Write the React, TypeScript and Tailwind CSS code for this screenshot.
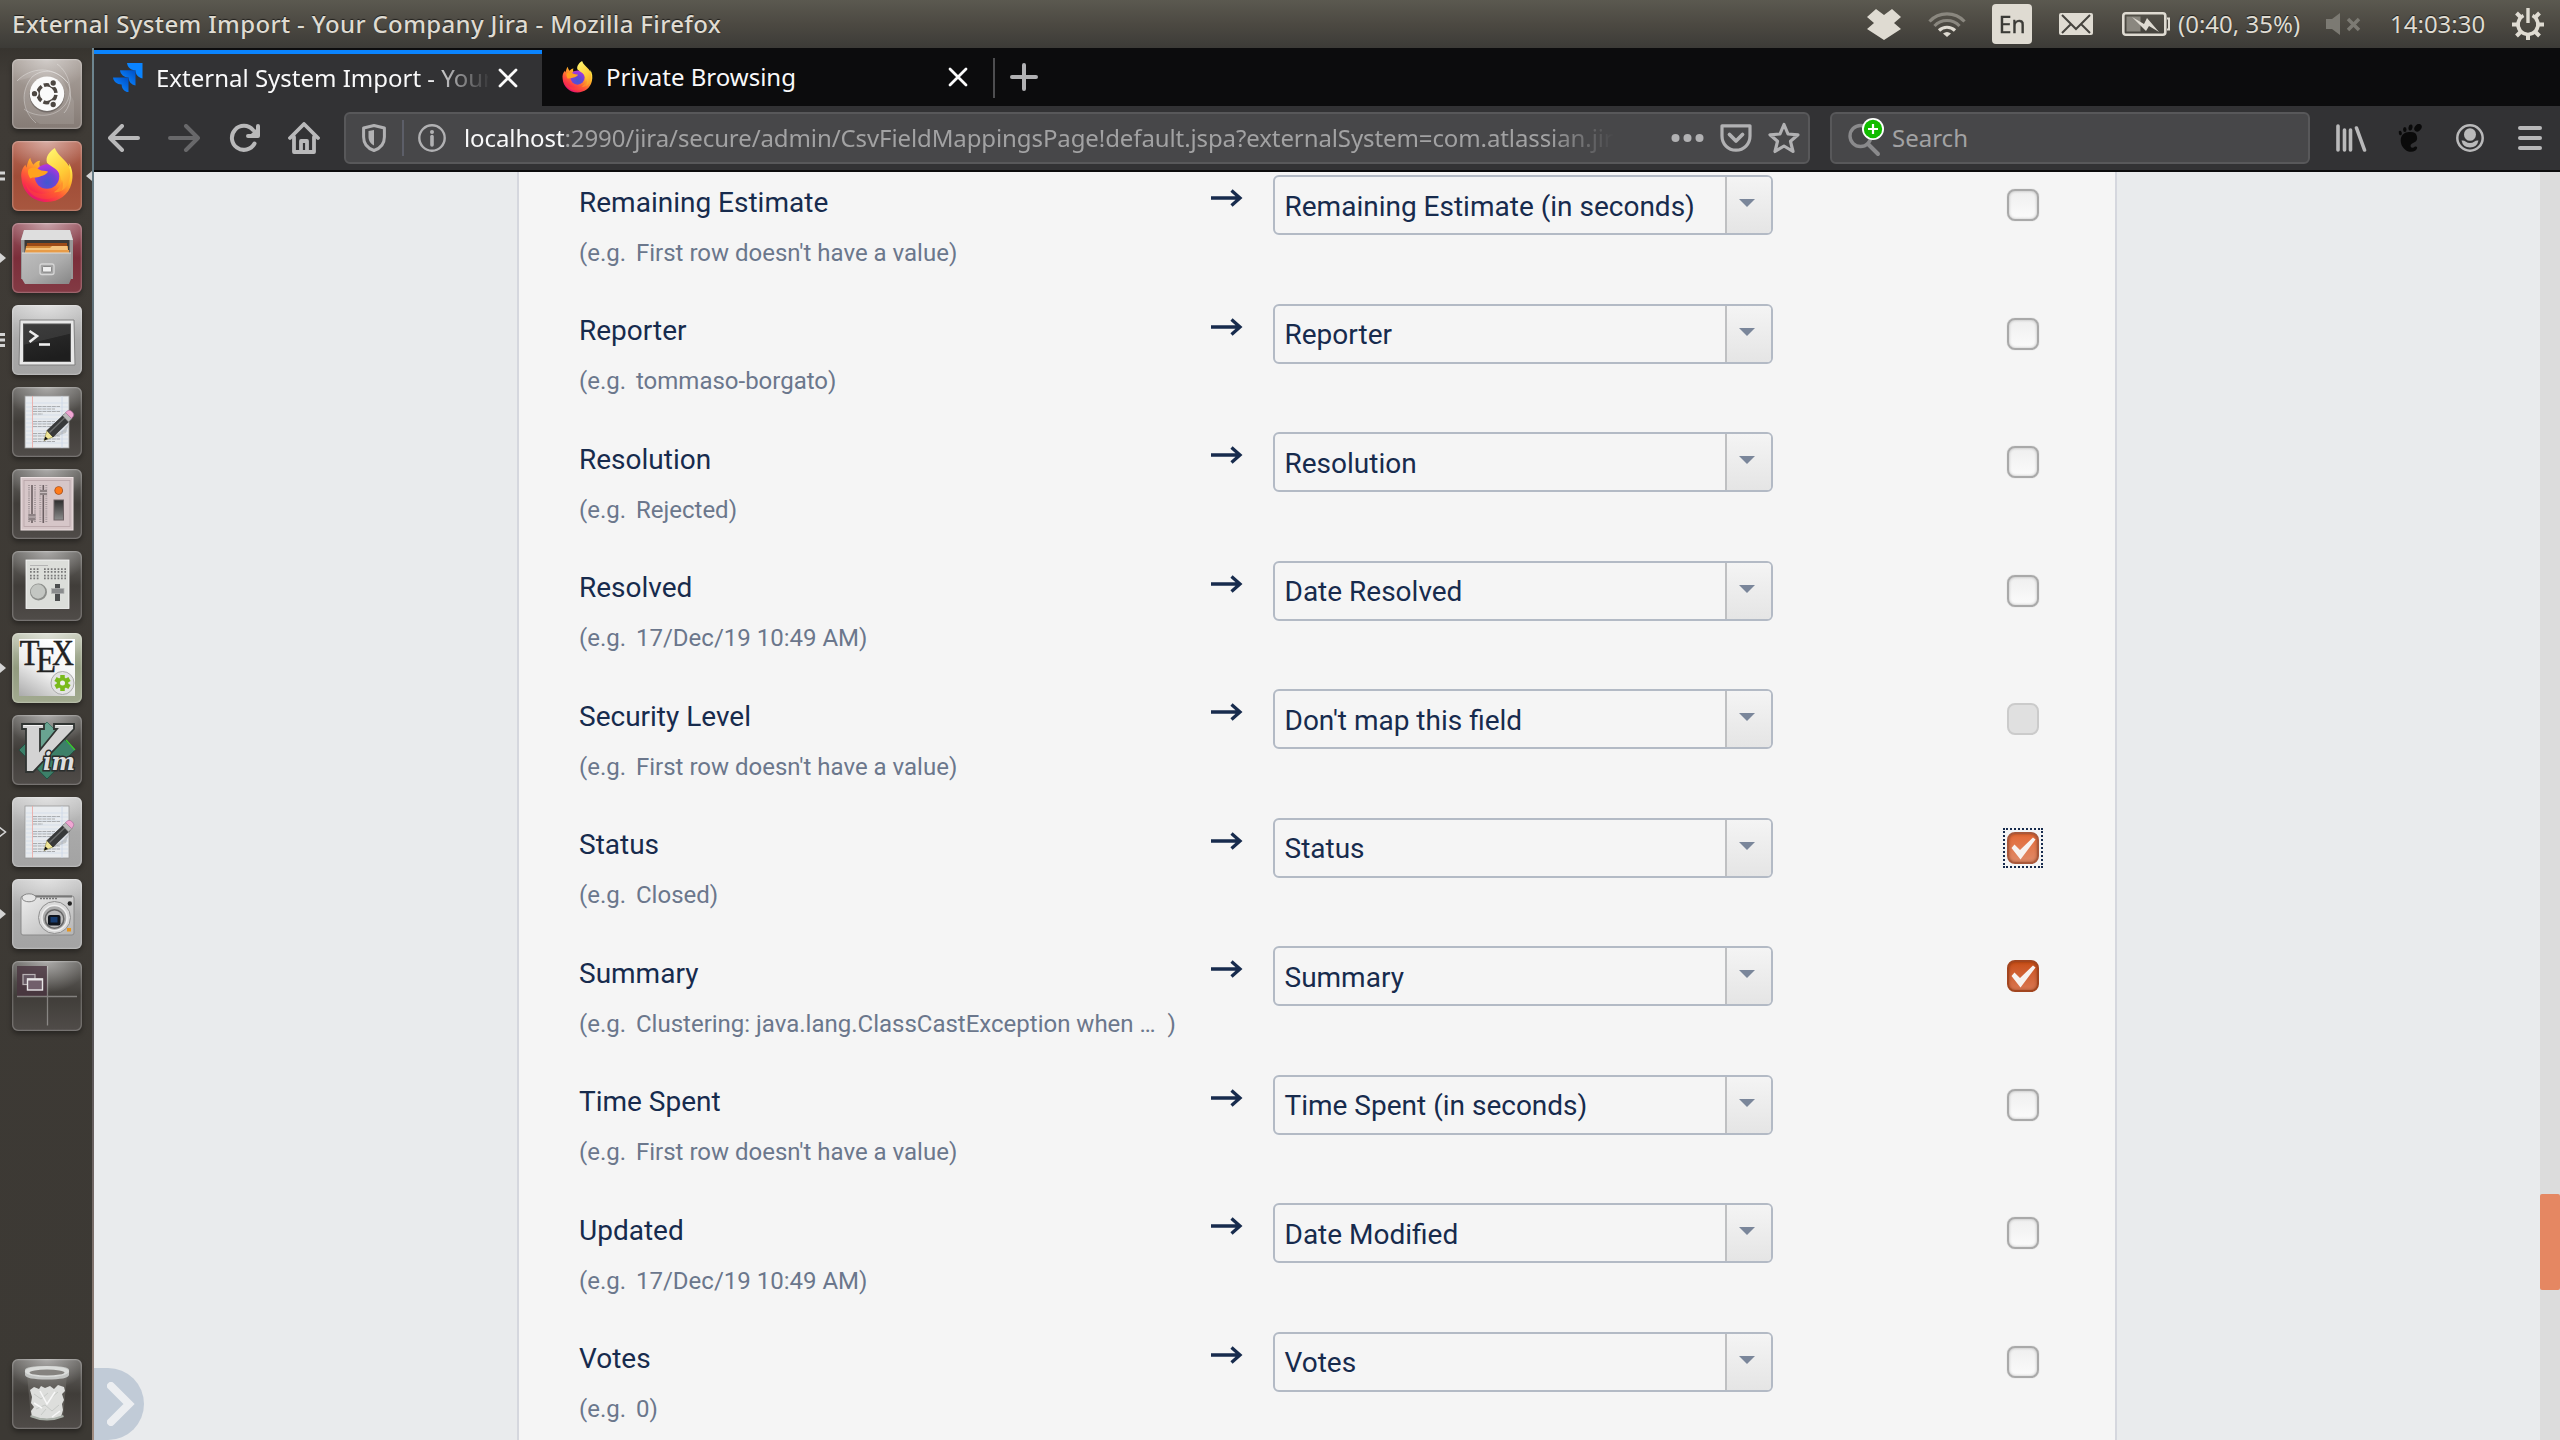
import React from "react";

const ROWS = [
  { name: "Remaining Estimate", eg: "First row doesn't have a value)", field: "Remaining Estimate (in seconds)", state: "off" },
  { name: "Reporter", eg: "tommaso-borgato)", field: "Reporter", state: "off" },
  { name: "Resolution", eg: "Rejected)", field: "Resolution", state: "off" },
  { name: "Resolved", eg: "17/Dec/19 10:49 AM)", field: "Date Resolved", state: "off" },
  { name: "Security Level", eg: "First row doesn't have a value)", field: "Don't map this field", state: "disabled" },
  { name: "Status", eg: "Closed)", field: "Status", state: "focus" },
  { name: "Summary", eg: "Clustering: java.lang.ClassCastException when …\u00a0 )", field: "Summary", state: "on" },
  { name: "Time Spent", eg: "First row doesn't have a value)", field: "Time Spent (in seconds)", state: "off" },
  { name: "Updated", eg: "17/Dec/19 10:49 AM)", field: "Date Modified", state: "off" },
  { name: "Votes", eg: "0)", field: "Votes", state: "off" },
];

function FirefoxLogo({ id, className }: { id: string; className?: string }) {
  return (
    <svg viewBox="0 0 54 56" className={className}>
      <defs>
        <linearGradient id={id + "a"} x1="0.85" y1="0.1" x2="0.2" y2="1">
          <stop offset="0" stopColor="#fff44f" />
          <stop offset="0.3" stopColor="#ffb329" />
          <stop offset="0.58" stopColor="#ff5f36" />
          <stop offset="0.8" stopColor="#f82a4e" />
          <stop offset="1" stopColor="#d8098a" />
        </linearGradient>
        <radialGradient id={id + "b"} cx="0.5" cy="0.75" r="0.75">
          <stop offset="0" stopColor="#4158d0" />
          <stop offset="0.5" stopColor="#6e44d6" />
          <stop offset="1" stopColor="#b833e1" />
        </radialGradient>
        <linearGradient id={id + "c"} x1="0.3" y1="0" x2="0.7" y2="1">
          <stop offset="0" stopColor="#fff36b" />
          <stop offset="0.6" stopColor="#ffcb36" />
          <stop offset="1" stopColor="#ff9a2b" />
        </linearGradient>
      </defs>
      <path d="M10 10C10 13 12 15 13 17C15 15 17 13 20 13C19 15 19 17 20 19L40 16C45 14 48 17 50 19L49 15C53 21 54 28 52 36C49 48 39 55 27 55C13 55 2 45 1 31C0 25 2 20 5 17L6 20C7 16 8 12 10 10Z" fill={`url(#${id}a)`} />
      <circle cx="27" cy="29" r="12.5" fill={`url(#${id}b)`} />
      <path d="M35 0C37 6 43 10 47 15C51 20 52 27 49 35C46 43 39 46 34 45C41 41 43 34 40 27C38 21 31 19 27 15C25 9 30 3 35 0Z" fill={`url(#${id}c)`} />
      <path d="M8 22C11 19 16 19 19 22C22 24 25 23 28 24C27 27 23 28 20 29C16 31 13 29 10 31C8 28 7 25 8 22Z" fill="#ffa21f" />
      <path d="M5 34C8 45 20 49 31 45C38 43 42 37 42 32C47 44 36 52 26 52C14 52 6 44 5 34Z" fill="#ff5a2c" opacity="0.35" />
    </svg>
  );
}

function JiraLogo() {
  return (
    <svg viewBox="0 0 30 29" className="h-[29px] w-[30px]">
      <defs>
        <linearGradient id="jg" x1="1" y1="0" x2="0.3" y2="0.8">
          <stop offset="0.1" stopColor="#0052c8" />
          <stop offset="1" stopColor="#0a84ff" />
        </linearGradient>
      </defs>
      <path d="M0 14.500H15.500V29.500C11 28.500 8.600 25.500 8.600 21.500C4 21.500 .5 18.500 0 14.500Z" fill="url(#jg)" />
      <path d="M7 7.300H22.500V22.500C18 21.500 15.600 18.500 15.600 14.500C11 14.400 7.500 11.500 7 7.300Z" fill="url(#jg)" />
      <path d="M14 0H29.500V15.500C25 14.500 22.500 11.500 22.500 7.300C18 7.300 14.500 4.500 14 0Z" fill="#0a84ff" />
    </svg>
  );
}

/* ---------- launcher icons, all on a 70 by 70 tile ---------- */

function UbuntuIcon() {
  return (
    <>
      <path d="M5 22C18 8 42 6 56 24C62 38 56 50 52 54" fill="none" stroke="#fff" strokeOpacity="0.35" strokeWidth="1" />
      <path d="M45 5C58 14 62 34 53 46C42 60 22 58 12 50" fill="none" stroke="#fff" strokeOpacity="0.3" strokeWidth="1" />
      <path d="M24 64C10 52 8 32 20 18C32 8 46 12 56 24" fill="none" stroke="#fff" strokeOpacity="0.35" strokeWidth="1" />
      <path d="M5 22C16 10 36 8 50 20L62 42V65H28C10 54 8 32 20 18Z" fill="#fff" opacity="0.1" />
      <circle cx="35" cy="36" r="17.500" fill="#000" opacity="0.25" />
      <circle cx="35" cy="34.700" r="17.200" fill="#fafafa" />
      <circle cx="35" cy="34.700" r="9" fill="none" stroke="#4d4742" strokeWidth="3.600" strokeDasharray="16.500 2.350" strokeDashoffset="-1.200" />
      <circle cx="22.500" cy="34.700" r="3.400" fill="#4d4742" stroke="#fafafa" strokeWidth="1.500" />
      <circle cx="41.200" cy="24" r="3.400" fill="#4d4742" stroke="#fafafa" strokeWidth="1.500" />
      <circle cx="41.200" cy="45.500" r="3.400" fill="#4d4742" stroke="#fafafa" strokeWidth="1.500" />
    </>
  );
}

function FilesIcon() {
  return (
    <>
      <defs>
        <linearGradient id="cab" x1="0" y1="0" x2="1" y2="1">
          <stop offset="0" stopColor="#bdbdbd" />
          <stop offset="0.5" stopColor="#adadad" />
          <stop offset="1" stopColor="#868686" />
        </linearGradient>
      </defs>
      <path d="M12 7H58L61 17V56H9V17Z" fill="#999" />
      <path d="M12 7H58L61 17H9Z" fill="#dedede" />
      <rect x="12.500" y="17" width="45" height="14" fill="#3a3836" />
      <path d="M15 20H55V31H14Z" fill="#9c4a17" />
      <path d="M14 23H56V31H13Z" fill="#d48736" />
      <path d="M14 25H38L40 23H55L57 31H13Z" fill="#f4c27c" />
      <path d="M14 27H57V31H13Z" fill="#e89c48" />
      <path d="M10 30H59V56L57 61H13L10 56Z" fill="url(#cab)" />
      <path d="M10 30H59" stroke="#ddd" />
      <rect x="28" y="41" width="14" height="10.500" rx="2" fill="#a5a5a5" stroke="#d6d6d6" strokeWidth="1.300" />
      <rect x="30.500" y="43.500" width="9" height="5.500" rx="1" fill="#eee" stroke="#777" strokeWidth=".8" />
    </>
  );
}

function TerminalIcon() {
  return (
    <>
      <defs>
        <linearGradient id="scr" x1="0" y1="0" x2="0.3" y2="1">
          <stop offset="0" stopColor="#3d3d3d" />
          <stop offset="0.5" stopColor="#373737" />
          <stop offset="0.52" stopColor="#262626" />
          <stop offset="1" stopColor="#1e1e1e" />
        </linearGradient>
      </defs>
      <path d="M8 15H62L63 60H7Z" fill="#e8e8e8" stroke="#808080" />
      <rect x="11.500" y="19" width="47" height="37.500" fill="url(#scr)" stroke="#555" />
      <path d="M17.500 26L25 31L17.500 37" fill="none" stroke="#eee" strokeWidth="2.600" />
      <path d="M27 39.500H38" stroke="#eee" strokeWidth="2.600" />
    </>
  );
}

function EditorIcon() {
  return (
    <>
      <rect x="13" y="9" width="44" height="52" fill="#e8ebee" stroke="#999" strokeWidth=".8" />
      {[16, 20, 24, 28, 32, 36, 40, 44, 48, 52, 56].map((y) => (
        <path key={y} d={`M14 ${y}H56`} stroke="#c9d6e8" strokeWidth=".6" />
      ))}
      <path d="M20.500 9V61" stroke="#eba6a0" strokeWidth=".8" />
      <path d="M50 9V61" stroke="#c9d6e8" strokeWidth=".8" />
      {[19.500, 22, 24.500, 27, 34.500, 37, 39.500, 46.500, 49, 52, 54.500].map((y, i) => (
        <path key={y} d={`M21 ${y}H${i === 3 ? 31 : i % 3 === 1 ? 43 : 48}`} stroke="#aaadb0" strokeWidth="1.200" strokeDasharray="4 .7" />
      ))}
      <path d="M33 53L50 44L57 36L54 46Z" fill="#000" opacity="0.15" />
      <path d="M32 53.500L35 43.500L41 50Z" fill="#f0e695" stroke="#97914a" strokeWidth=".6" />
      <path d="M32 53.500L33.300 49.500L36 52Z" fill="#111" />
      <path d="M35 43.500L52.500 27L58 33.500L41 50Z" fill="#383a3a" stroke="#222" strokeWidth=".6" />
      <path d="M37.500 45.500L54 29.500" stroke="#696b6b" strokeWidth="1.400" />
      <path d="M50.500 28.500L54 25.500L60 31.500L56.500 35Z" fill="#b9b9b9" stroke="#777" strokeWidth=".5" />
      <path d="M53.500 25.500L56 23.500Q58 22.500 60.500 25Q62.500 27.500 61.500 29L59.500 31.500Z" fill="#f0a6d2" stroke="#a8669a" strokeWidth=".6" />
    </>
  );
}

function MixerIcon() {
  return (
    <>
      <defs>
        <linearGradient id="sw" x1="0" y1="0" x2="0" y2="1">
          <stop offset="0" stopColor="#2d2d2d" />
          <stop offset="1" stopColor="#8c8c8c" />
        </linearGradient>
      </defs>
      <rect x="9" y="8.500" width="52" height="52.500" fill="#d6c6c8" stroke="#eee2e3" />
      <rect x="12" y="11.500" width="46" height="46" fill="none" stroke="#b7a4a7" strokeWidth=".8" />
      <path d="M20 16V54M31.300 16V54" stroke="#a3989a" strokeWidth="8" strokeDasharray=".9 1" />
      <path d="M20 16V54M31.300 16V54" stroke="#d6c6c8" strokeWidth="4" />
      <path d="M20 16V54M31.300 16V54" stroke="#6b5f62" strokeWidth="1.600" />
      <rect x="16.500" y="45" width="7" height="6.500" fill="#8e8385" />
      <rect x="28" y="21" width="7" height="5" fill="#8e8385" />
      <path d="M16.500 48H23.500M28 23.500H35" stroke="#cfc4c5" strokeWidth=".9" />
      <circle cx="46.700" cy="21.500" r="4.300" fill="#a8501c" />
      <circle cx="46.700" cy="21.500" r="3.400" fill="#ff7a1a" />
      <rect x="42" y="31" width="9.500" height="20" fill="url(#sw)" stroke="#6d6265" />
    </>
  );
}

function RadioIcon() {
  return (
    <>
      <rect x="14" y="9" width="43" height="48.500" fill="#dcdeda" stroke="#fafafa" strokeWidth=".8" />
      <path d="M18 14.500H36" stroke="#aaa" strokeWidth=".8" />
      {[19.500, 26].map((y) => (
        <g key={y}>
          <path d={`M18 ${y}H28M32 ${y}H54`} stroke="#777" strokeWidth="4.600" strokeDasharray="1.700 1.700" />
          <path d={`M18 ${y}H54`} stroke="#dcdeda" strokeWidth="1" />
        </g>
      ))}
      <circle cx="26.500" cy="41" r="8.500" fill="#8c8e8b" />
      <circle cx="26" cy="40.500" r="7.200" fill="#c3c6c2" />
      <rect x="43" y="33" width="5" height="17" fill="#4c4e4f" />
      <rect x="39.500" y="37.500" width="12.500" height="5" fill="#8a8c8d" stroke="#b5b7b5" strokeWidth=".7" />
    </>
  );
}

function TexIcon() {
  return (
    <>
      <defs>
        <linearGradient id="tx" x1="0" y1="1" x2="0.6" y2="0">
          <stop offset="0" stopColor="#aaa" />
          <stop offset="0.5" stopColor="#eee" />
          <stop offset="1" stopColor="#fff" />
        </linearGradient>
      </defs>
      <rect x="7" y="6" width="56" height="57" fill="url(#tx)" />
      <g fontFamily="Liberation Serif, serif" fill="#222" stroke="#222" strokeWidth=".4">
        <text x="7.500" y="32" fontSize="36" textLength="20" lengthAdjust="spacingAndGlyphs">T</text>
        <text x="24" y="39" fontSize="36" textLength="20" lengthAdjust="spacingAndGlyphs">E</text>
        <text x="40" y="32" fontSize="36" textLength="22" lengthAdjust="spacingAndGlyphs">X</text>
      </g>
      <circle cx="50.500" cy="50" r="11.500" fill="#e3e3e3" stroke="#aaa" />
      <g stroke="#7aba1c" strokeWidth="4.500">
        <path d="M50.500 42V58M43.500 46L57.500 54M57.500 46L43.500 54" />
      </g>
      <circle cx="50.500" cy="50" r="5.800" fill="#7aba1c" />
      <circle cx="50.500" cy="50" r="2.500" fill="#eee" />
    </>
  );
}

function VimIcon() {
  return (
    <>
      <path d="M35 7L63 35L35 64L7 35Z" fill="#3c8069" stroke="#245043" />
      <path d="M35 7L50 22L35 37L22 24Z" fill="#69a391" />
      <path d="M54 25L63 35" stroke="#3ad02e" strokeWidth="1.200" />
      <path d="M10 9H32V14H28V35L45 14H42V9H62V14L21 57H14V14H10Z" fill="#d3d3d3" stroke="#303432" strokeWidth="1.800" />
      <path d="M11.500 10.500H30.500M43.500 10.500H61" stroke="#f4f4f4" strokeWidth="1.200" />
      <text x="31" y="55" fontFamily="DejaVu Serif, serif" fontStyle="italic" fontWeight="bold" fontSize="25" textLength="32" lengthAdjust="spacingAndGlyphs" fill="#dedede" stroke="#2a2e2d" strokeWidth="3" paintOrder="stroke">im</text>
    </>
  );
}

function CameraIcon() {
  return (
    <>
      <defs>
        <linearGradient id="cam" x1="0" y1="0" x2="1" y2="1">
          <stop offset="0" stopColor="#ededed" />
          <stop offset="1" stopColor="#b5b5b5" />
        </linearGradient>
      </defs>
      <rect x="9" y="17" width="53" height="39" rx="2" fill="url(#cam)" stroke="#8a8a8a" />
      <path d="M11 17.500H60" stroke="#777" strokeWidth="2.200" />
      <path d="M28 19.500H46" stroke="#777" strokeWidth="1.400" strokeDasharray="2 1" />
      <ellipse cx="17" cy="18.800" rx="7" ry="4" fill="#e5e5e5" stroke="#888" />
      <circle cx="42.500" cy="38.500" r="16" fill="#d9d9d9" stroke="#8f8f8f" />
      <circle cx="42.500" cy="39" r="12.500" fill="#ababab" stroke="#efefef" strokeWidth="1.500" />
      <circle cx="42.500" cy="40" r="9.300" fill="#bbb" stroke="#666" strokeWidth="1.500" />
      <rect x="36" y="36" width="12.500" height="10.500" rx="2" fill="#10151d" />
      <rect x="38.500" y="38" width="7" height="5.500" fill="#173c70" />
      <circle cx="57.800" cy="24.500" r="2.200" fill="#222" />
      <rect x="55" y="49" width="4" height="3.500" fill="#e8961e" />
    </>
  );
}

function WorkspaceIcon() {
  return (
    <>
      <rect x="5" y="5" width="30" height="30" fill="#4a3440" opacity="0.8" />
      <path d="M35.500 5V64.500M5 35.500H65" stroke="#fff" strokeOpacity="0.35" strokeWidth="1.300" />
      <rect x="11" y="13.500" width="12" height="10" fill="#655762" stroke="#b9b3b5" strokeWidth="1.200" />
      <rect x="15.500" y="18" width="15" height="11" fill="#715f6b" stroke="#e8e6e7" strokeWidth="1.400" />
      <path d="M15 18.500H31" stroke="#e8e6e7" strokeWidth="2" />
    </>
  );
}

function TrashIcon() {
  return (
    <>
      <path d="M15 16L19 58Q35 63 51 58L55 16Z" fill="#7a7774" opacity="0.45" />
      <path d="M18 31L22 28L27 30L29 27L33 29L38 27L42 30L46 26L52 28L53 32L50 35L52 41L50 45L51 51L49 58Q35 62 20 58L19 52L22 48L19 44L20 38Z" fill="#dddedc" />
      <path d="M22 35L29 40L36 34M40 38L46 33M24 50L33 46L40 52L47 46M29 56L34 50" fill="none" stroke="#c6c9c6" strokeWidth="1" />
      <path d="M28 32L35 45L43 33M22 44L30 49M40 58L48 52" fill="none" stroke="#f8f8f8" strokeWidth="1.500" />
      <path d="M18.500 57Q35 64 51.500 57" fill="none" stroke="#aab0a9" strokeWidth="2" />
      <path d="M13 11Q13 7 35 7Q57 7 57 11V16Q56 20.500 35 20.500Q14 20.500 13 16Z" fill="#c2c4c2" />
      <ellipse cx="35" cy="12.500" rx="22" ry="5.500" fill="#dadcda" />
      <ellipse cx="35" cy="13.500" rx="17.500" ry="3" fill="#85837f" />
    </>
  );
}

type TileProps = { tint: string; left?: "two" | "three" | "solid" | "open"; active?: boolean; children: React.ReactNode };

function Tile({ tint, left, active, children }: TileProps) {
  return (
    <div className="relative h-[70px] w-[92px] shrink-0 px-[11px]">
      <div className={`mx-[1px] h-[70px] w-[70px] rounded-[6px] shadow-[0_3px_5px_rgba(0,0,0,0.35)] ${tint}`}>
        <svg viewBox="0 0 70 70" className="block h-[70px] w-[70px]">
          <defs>
            <radialGradient id="shine" cx="0.5" cy="0" r="0.6" gradientTransform="translate(0 0) scale(1 0.75)">
              <stop offset="0" stopColor="#fff" stopOpacity="0.45" />
              <stop offset="1" stopColor="#fff" stopOpacity="0" />
            </radialGradient>
          </defs>
          <rect width="70" height="70" rx="6" fill="url(#shine)" />
          {children}
          <rect x=".7" y=".7" width="68.600" height="68.600" rx="5.500" fill="none" stroke="#fff" strokeOpacity="0.22" strokeWidth="1.300" />
        </svg>
      </div>
      {left && (
        <svg viewBox="0 0 7 16" className="absolute top-[27px] left-0 h-[16px] w-[7px]">
          {left === "solid" && <path d="M0 3L6 8L0 13Z" fill="#d4d4d4" />}
          {left === "open" && <path d="M-1 3L5.500 8L-1 13" fill="none" stroke="#d4d4d4" strokeWidth="1.500" />}
          {left === "two" && <path d="M0 5H5M0 11H5" stroke="#d4d4d4" strokeWidth="3" />}
          {left === "three" && <path d="M0 2.500H5M0 8H5M0 13.500H5" stroke="#d4d4d4" strokeWidth="3" />}
        </svg>
      )}
      {active && (
        <svg viewBox="0 0 6 10" className="absolute top-[30px] right-0 h-[10px] w-[6px]">
          <path d="M6 0L0 5L6 10Z" fill="#d4d4d4" />
        </svg>
      )}
    </div>
  );
}

const dark = "bg-linear-to-b from-[#696764] via-[#403d39] to-[#504c49]";
const silver = "bg-linear-to-b from-[#c9c9c9] via-[#a9a9a9] to-[#a3a3a3]";

function Launcher() {
  return (
    <div className="flex w-[94px] shrink-0">
      <aside className="flex w-[92px] flex-col gap-[12px] bg-linear-to-b from-[#37342f] via-[#3f3b36] via-2% to-[#3c3934] pt-[11px]">
        <Tile tint="bg-linear-to-b from-[#aca39d] to-[#857b75]"><UbuntuIcon /></Tile>
        <Tile tint="bg-linear-to-b from-[#b86a58] via-[#a04d38] to-[#a8573f]" left="two" active>
          <svg x="8.500" y="7" width="53" height="55" viewBox="0 0 54 56"><FirefoxLogo id="ffl" /></svg>
        </Tile>
        <Tile tint="bg-linear-to-b from-[#9a5863] via-[#7b2e3a] to-[#833a44]" left="solid"><FilesIcon /></Tile>
        <Tile tint={silver} left="three"><TerminalIcon /></Tile>
        <Tile tint={dark}><EditorIcon /></Tile>
        <Tile tint={dark}><MixerIcon /></Tile>
        <Tile tint={dark}><RadioIcon /></Tile>
        <Tile tint="bg-linear-to-b from-[#c3c8b6] via-[#929b7f] to-[#a2aa90]" left="solid"><TexIcon /></Tile>
        <Tile tint={dark}><VimIcon /></Tile>
        <Tile tint={silver} left="open"><EditorIcon /></Tile>
        <Tile tint={silver} left="solid"><CameraIcon /></Tile>
        <Tile tint={dark}><WorkspaceIcon /></Tile>
        <div className="mt-auto pb-[11px]">
          <Tile tint={dark}><TrashIcon /></Tile>
        </div>
      </aside>
      <div className="w-[2px] bg-linear-to-b from-[#6f8791] via-[#3b3d45] via-60% to-[#a08c80]" />
    </div>
  );
}

/* ---------- desktop top panel ---------- */

function TopPanel() {
  return (
    <header className="flex h-[48px] shrink-0 items-center justify-between bg-linear-to-b from-[#5b5950] via-[#4c4942] to-[#3c3b37] text-[24px] text-[#dfdbd2]">
      <div className="w-[760px] pb-[1px] pl-[12px] font-medium tracking-[0.36px] whitespace-nowrap [text-shadow:0_-1px_1px_rgba(0,0,0,0.6)]">
        External System Import - Your Company Jira - Mozilla Firefox
      </div>
      <div className="flex h-[48px] items-center [text-shadow:0_-1px_1px_rgba(0,0,0,0.6)]">
        <svg viewBox="0 0 34 31" className="mr-[27px] h-[31px] w-[34px]" fill="#dfdbd2">
          <path d="M9 0L17 6L25 0L34 8L27 14L34 20L17 31L0 20L7 14L0 8Z" />
        </svg>
        <svg viewBox="0 0 38 26" className="mr-[26px] h-[26px] w-[38px]" fill="none" strokeWidth="3.200">
          <path d="M1.500 10.500A24 24 0 0 1 36.500 10.500" stroke="#8a877f" />
          <path d="M6.500 15A17 17 0 0 1 31.500 15" stroke="#8a877f" />
          <path d="M11 19.500A11.500 11.500 0 0 1 27 19.500" stroke="#dfdbd2" />
          <path d="M15 22.500L19 26L23 22.500Q19 19.500 15 22.500Z" fill="#dfdbd2" />
        </svg>
        <div className="mr-[27px] flex h-[40px] w-[40px] items-center justify-center rounded-[4px] bg-[#dfdbd2] text-[#3c3b37] [-webkit-text-stroke:0.4px_#3c3b37] [text-shadow:none]">
          <span className="scale-x-95">En</span>
        </div>
        <svg viewBox="0 0 34 22" className="mr-[29px] h-[22px] w-[34px]">
          <rect width="34" height="22" rx="2" fill="#dfdbd2" />
          <path d="M3 2L17 16L31 2M3 20L12 11M31 20L22 11" fill="none" stroke="#45433e" strokeWidth="2" />
        </svg>
        <svg viewBox="0 0 48 24" className="mr-[8px] h-[24px] w-[48px]">
          <rect x="1.300" y="1.300" width="42" height="21.400" rx="2.500" fill="none" stroke="#dfdbd2" strokeWidth="2.600" />
          <path d="M45 6.500H47V17.500H45" fill="none" stroke="#dfdbd2" strokeWidth="2" />
          <rect x="4.500" y="4.500" width="14" height="15" fill="#8a877f" />
          <path d="M10 5L22 12L25 6L37 20L27 14L24 19Z" fill="#dfdbd2" />
        </svg>
        <span className="w-[148px] pb-[1px] whitespace-nowrap">(0:40, 35%)</span>
        <svg viewBox="0 0 35 22" className="mr-[29px] h-[22px] w-[35px]">
          <path d="M0 6H6L14 0V22L6 16H0Z" fill="#7c7a73" />
          <path d="M22 6L33 17M33 6L22 17" stroke="#7c7a73" strokeWidth="3.500" />
        </svg>
        <span className="w-[122px] pb-[1px] whitespace-nowrap">14:03:30</span>
        <svg viewBox="0 0 32 32" className="mr-[16px] h-[32px] w-[32px]" fill="none" stroke="#dfdbd2">
          <path d="M11.500 7.500A10 10 0 1 0 20.500 7.500" strokeWidth="3.600" />
          <path d="M16 0V15" strokeWidth="3.400" />
          <path d="M16 27V32M0 16.500H5M27 16.500H32M4.500 5L8.500 9M27.500 5L23.500 9M4.500 28L8.500 24M27.500 28L23.500 24" strokeWidth="4" />
        </svg>
      </div>
    </header>
  );
}

/* ---------- browser chrome ---------- */

function CloseX() {
  return (
    <svg viewBox="0 0 20 20" className="h-[20px] w-[20px] shrink-0" stroke="#fbfbfb" strokeWidth="2.800" strokeLinecap="round">
      <path d="M2 2L18 18M18 2L2 18" />
    </svg>
  );
}

function TabStrip() {
  return (
    <div className="flex h-[58px] shrink-0 bg-[#0c0c0d] pt-[2px] text-[24px] text-[#f9f9fa]">
      <div className="flex h-[56px] w-[448px] items-center border-t-4 border-[#0a84ff] bg-[#323234] pb-[5px] pl-[19px]">
        <JiraLogo />
        <div className="ml-[13px] w-[332px] overflow-hidden whitespace-nowrap [mask-image:linear-gradient(to_right,black_270px,transparent_335px)]">
          External System Import - Your Company
        </div>
        <div className="ml-[10px] flex"><CloseX /></div>
      </div>
      <div className="flex h-[54px] w-[451px] items-center pl-[20px]">
        <FirefoxLogo id="fft" className="h-[32px] w-[31px]" />
        <div className="ml-[13px] w-[342px] whitespace-nowrap">Private Browsing</div>
        <CloseX />
      </div>
      <div className="mt-[8px] h-[40px] w-[2px] bg-[#4e4e50]" />
      <svg viewBox="0 0 28 28" className="mt-[13px] ml-[15px] h-[28px] w-[28px]" stroke="#b1b1b3" strokeWidth="4" strokeLinecap="round">
        <path d="M14 2V26M2 14H26" />
      </svg>
    </div>
  );
}

function NavBar() {
  return (
    <div className="flex h-[66px] shrink-0 items-center border-b-2 border-[#0c0c0d] bg-[#323234] text-[24px]">
      <svg viewBox="0 0 32 28" className="ml-[14px] h-[28px] w-[32px]" fill="none" stroke="#b9b9ba" strokeWidth="4" strokeLinecap="round" strokeLinejoin="round">
        <path d="M14 2L2 14L14 26M2 14H30" />
      </svg>
      <svg viewBox="0 0 32 28" className="ml-[28px] h-[28px] w-[32px]" fill="none" stroke="#68686a" strokeWidth="4" strokeLinecap="round" strokeLinejoin="round">
        <path d="M18 2L30 14L18 26M30 14H2" />
      </svg>
      <svg viewBox="0 0 32 30" className="ml-[29px] h-[30px] w-[32px]" fill="none" stroke="#b9b9ba" strokeWidth="4" strokeLinecap="round">
        <path d="M25.500 20.500A12 12 0 1 1 24 7" />
        <path d="M29 3V13H19" strokeLinejoin="round" />
        <path d="M29 4L20 13H29Z" fill="#b9b9ba" stroke="none" />
      </svg>
      <svg viewBox="0 0 32 32" className="ml-[27px] h-[32px] w-[32px]" fill="none" stroke="#b9b9ba" strokeWidth="3.800" strokeLinecap="round" strokeLinejoin="round">
        <path d="M2 16L16 2L30 16" />
        <path d="M6 15V30H26V15" />
        <path d="M13 30V19H19V30" />
      </svg>

      <div className="ml-[24px] flex h-[52px] w-[1466px] items-center rounded-[6px] border-2 border-[#58585a] bg-[#474749] text-[#a2a2a3]">
        <svg viewBox="0 0 24 28" className="ml-[16px] h-[28px] w-[24px]">
          <path d="M12 1.500L22.400 4V13C22.400 20 18 24.500 12 26.500C6 24.500 1.600 20 1.600 13V4Z" fill="none" stroke="#b1b1b3" strokeWidth="3" strokeLinejoin="round" />
          <path d="M12 6V21.500C8.500 19.500 6.500 17 6.500 12.500V7Z" fill="#b1b1b3" />
        </svg>
        <div className="ml-[16px] h-[36px] w-[2px] bg-[#5c5e68]" />
        <svg viewBox="0 0 28 28" className="ml-[14px] h-[28px] w-[28px]">
          <circle cx="14" cy="14" r="12.700" fill="none" stroke="#b1b1b3" strokeWidth="2.400" />
          <circle cx="14" cy="8" r="2" fill="#b1b1b3" />
          <path d="M14 12.500V21" stroke="#b1b1b3" strokeWidth="3.600" strokeLinecap="round" />
        </svg>
        <div className="ml-[18px] w-[1152px] overflow-hidden tracking-[-0.1px] whitespace-nowrap [mask-image:linear-gradient(to_right,black_1085px,transparent_1150px)]">
          <span className="text-[#f9f9fa]">localhost</span>:2990/jira/secure/admin/CsvFieldMappingsPage!default.jspa?externalSystem=com.atlassian.jira
        </div>
        <svg viewBox="0 0 34 8" className="ml-[55px] h-[8px] w-[34px]" fill="#b1b1b3">
          <circle cx="4.500" cy="4" r="4" />
          <circle cx="16.500" cy="4" r="4" />
          <circle cx="28.500" cy="4" r="4" />
        </svg>
        <svg viewBox="0 0 32 28" className="ml-[15px] h-[28px] w-[32px]" fill="none" stroke="#b1b1b3" strokeLinecap="round" strokeLinejoin="round">
          <path d="M2 1.800H30V12C30 20 24 26.200 16 26.200C8 26.200 2 20 2 12Z" strokeWidth="3.200" />
          <path d="M9.500 10.500L16 17L22.500 10.500" strokeWidth="3.800" />
        </svg>
        <svg viewBox="0 0 32 32" className="ml-[16px] h-[32px] w-[32px]" fill="none" stroke="#b1b1b3" strokeWidth="3.200" strokeLinejoin="round">
          <path d="M16 2.500L20 12L30 12.800L22.500 19.300L25 29.500L16 24L7 29.500L9.500 19.300L2 12.800L12 12Z" />
        </svg>
      </div>

      <div className="ml-[20px] flex h-[52px] w-[480px] items-center rounded-[6px] border-2 border-[#58585a] bg-[#474749] text-[#a2a2a3]">
        <svg viewBox="0 0 36 40" className="ml-[16px] h-[40px] w-[36px]">
          <circle cx="12.500" cy="18" r="10.500" fill="none" stroke="#8a8a8c" strokeWidth="3.400" />
          <path d="M20 26L30 36" stroke="#8a8a8c" strokeWidth="4" strokeLinecap="round" />
          <circle cx="25" cy="11" r="11" fill="#fff" />
          <circle cx="25" cy="11" r="9.200" fill="#12bc00" />
          <path d="M25 6V16M20 11H30" stroke="#fff" strokeWidth="2.200" />
        </svg>
        <span className="ml-[8px]">Search</span>
      </div>

      <svg viewBox="0 0 31 28" className="ml-[26px] h-[28px] w-[31px]" stroke="#b9b9ba" strokeWidth="3.600" strokeLinecap="round">
        <path d="M2 2V26M8.500 6V26M14.500 6V26M20.500 4L28.500 26" />
      </svg>
      <svg viewBox="0 0 24 28" className="ml-[31px] h-[28px] w-[24px]" fill="#0a0a0a">
        <path d="M17 9C20 12 20 17 16 18.500C14 19.500 12.500 20 12.500 22C13 24 15 24.500 17 22.500C19.500 22 20 24.500 17.500 26.500C12 30 4.500 26 3 19C1.500 12 6 8 11 8Q15 7.500 17 9Z" />
        <ellipse cx="20" cy="3.800" rx="4.200" ry="3.200" transform="rotate(-50 20 3.800)" />
        <ellipse cx="12.500" cy="3.500" rx="2" ry="3" transform="rotate(10 12.500 3.500)" />
        <ellipse cx="6.800" cy="5.500" rx="1.700" ry="2.600" />
        <ellipse cx="2.300" cy="9" rx="1.500" ry="2.300" transform="rotate(-15 2.300 9)" />
      </svg>
      <svg viewBox="0 0 28 28" className="ml-[34px] h-[28px] w-[28px]">
        <circle cx="14" cy="14" r="12.700" fill="none" stroke="#b9b9ba" strokeWidth="2.500" />
        <ellipse cx="14" cy="10.500" rx="6" ry="6.300" fill="#b9b9ba" />
        <path d="M5.500 16.500Q8 16 9.500 17.500Q14 20.500 18.500 17.500Q20 16 22.500 16.500Q21 23.500 14 23.500Q7 23.500 5.500 16.500Z" fill="#b9b9ba" />
      </svg>
      <div className="ml-[34px] flex flex-col gap-[6px]">
        <div className="h-[4px] w-[24px] rounded-full bg-[#b9b9ba]" />
        <div className="h-[4px] w-[24px] rounded-full bg-[#b9b9ba]" />
        <div className="h-[4px] w-[24px] rounded-full bg-[#b9b9ba]" />
      </div>
    </div>
  );
}

/* ---------- page ---------- */

function Checkbox({ state }: { state: string }) {
  if (state === "off")
    return <div className="h-[32px] w-[32px] rounded-[8px] border-[2px] border-[#a9a9a9] bg-linear-to-b from-[#efefef] to-[#fbfbfb] shadow-[inset_0_0_3px_rgba(0,0,0,0.25),0_0_1px_rgba(0,0,0,0.3)]" />;
  if (state === "disabled") return <div className="h-[32px] w-[32px] rounded-[8px] border-[2px] border-[#cbcbcb] bg-[#e0e0e0]" />;
  const box =
    state === "focus"
      ? "border-[#a9583a] from-[#e36a35] to-[#df8a68]"
      : "border-[#a2451f] from-[#c94f16] to-[#d97650]";
  return (
    <div className={state === "focus" ? "-m-[4px] border-2 border-dotted border-[#172b4d] p-[2px]" : ""}>
      <div className={`flex h-[32px] w-[32px] items-center justify-center rounded-[8px] border-2 bg-linear-to-b shadow-[inset_0_0_3px_rgba(90,30,0,0.5)] ${box}`}>
        <svg viewBox="0 0 28 28" className="h-[28px] w-[28px]" fill="#f7f3f1">
          <path d="M2.500 14L5.500 10.500L11 16L24 3.500L26.500 5.500L11.500 25.500Z" />
        </svg>
      </div>
    </div>
  );
}

function FieldRow({ row }: { row: (typeof ROWS)[number] }) {
  return (
    <div className="flex h-[128.52px] shrink-0 items-start text-[28px] leading-[40px] text-[#172b4d]">
      <div className="w-[632px] pt-[10.6px] whitespace-nowrap">
        <div>{row.name}</div>
        <div className="mt-[10px] text-[24px] text-[#6b778c]">
          (e.g.&nbsp; <span className="-ml-[2px]">{row.eg}</span>
        </div>
      </div>
      <svg viewBox="0 0 32 18" className="mt-[17px] h-[18px] w-[32px]" fill="none" stroke="#172b4d" strokeWidth="3.300">
        <path d="M0 9H29M20.500 1.500L29 9L20.500 16.500" />
      </svg>
      <div className="mt-[3px] ml-[30px] flex h-[60px] w-[500px] overflow-hidden rounded-[6px] border-2 border-[#b3bac5]">
        <div className="flex w-[450px] items-center pt-[3px] pl-[9.5px] whitespace-nowrap">{row.field}</div>
        <div className="flex flex-1 justify-center border-l-2 border-[#bfc0c2] bg-linear-to-b from-[#f4f4f4] to-[#e5e5e5] pr-[4px] pt-[22px]">
          <svg viewBox="0 0 16 8" className="h-[8px] w-[16px]">
            <path d="M0 0H16L8 8Z" fill="#7a869a" />
          </svg>
        </div>
      </div>
      <div className="mt-[17px] ml-[234px]">
        <Checkbox state={row.state} />
      </div>
    </div>
  );
}

function Page() {
  return (
    <div className="relative flex min-h-0 flex-1 overflow-hidden bg-[#e9ebed]">
      <main className="ml-[423px] w-[1600px] border-x-2 border-[#d5d7de] bg-[#f5f5f5] pl-[60px] font-['Roboto',sans-serif]">
        {ROWS.map((row) => (
          <FieldRow key={row.name} row={row} />
        ))}
      </main>
      <div className="ml-auto w-[20px] bg-[#dcdcdc] pt-[1022px]">
        <div className="h-[96px] rounded-[2px] bg-[#e58762]" />
      </div>
      <div className="absolute bottom-0 left-0 flex h-[72px] w-[50px] items-center rounded-r-[36px] bg-[#c1cbd7] pl-[13px]">
        <svg viewBox="0 0 28 44" className="h-[44px] w-[28px]" fill="none" stroke="#eceef1" strokeWidth="8" strokeLinecap="round">
          <path d="M4 4L22 22L4 40" />
        </svg>
      </div>
    </div>
  );
}

export default function App() {
  return (
    <div className="flex h-[1440px] w-[2560px] flex-col overflow-hidden font-['Noto_Sans',sans-serif]">
      <TopPanel />
      <div className="flex min-h-0 flex-1">
        <Launcher />
        <div className="flex min-w-0 flex-1 flex-col">
          <TabStrip />
          <NavBar />
          <Page />
        </div>
      </div>
    </div>
  );
}
